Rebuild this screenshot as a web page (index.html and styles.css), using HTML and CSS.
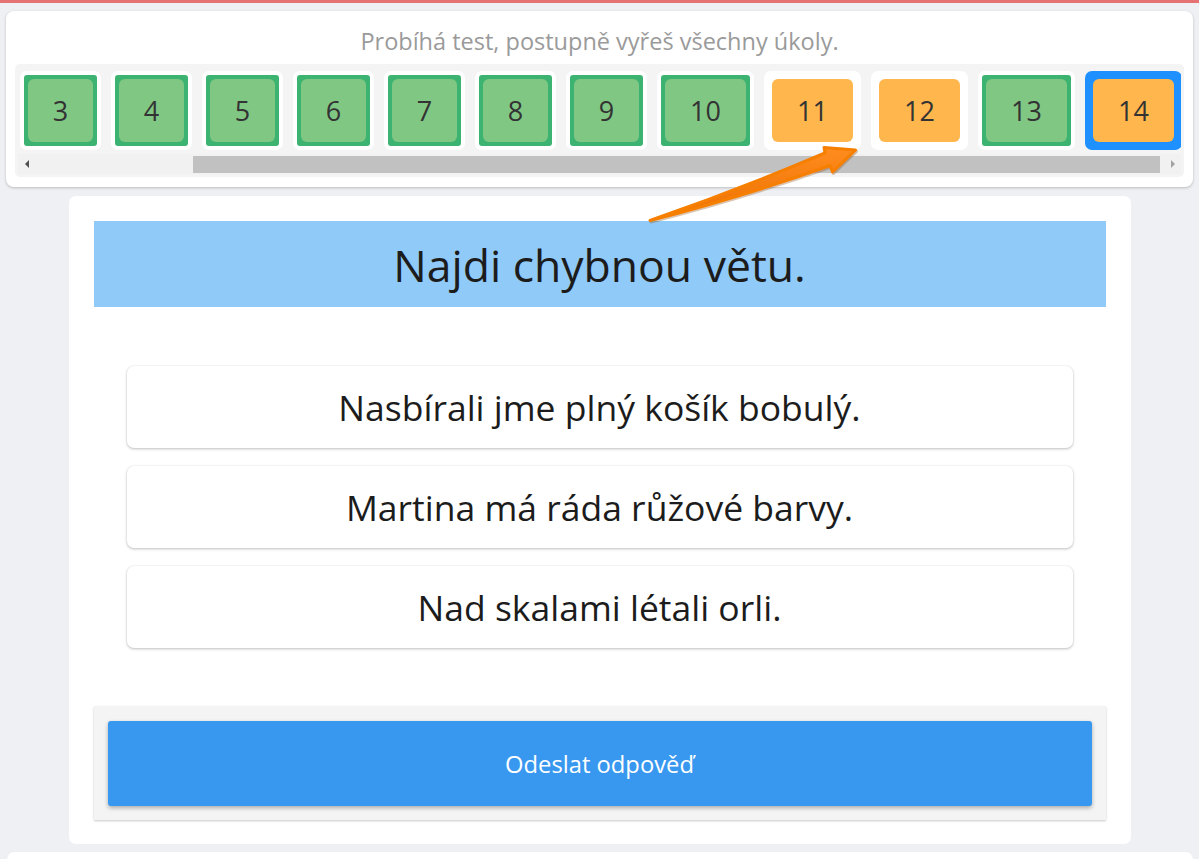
FILE: index.html
```html
<!DOCTYPE html>
<html lang="cs">
<head>
<meta charset="utf-8">
<title>Test</title>
<link rel="stylesheet" href="styles.css">
</head>
<body>
<div class="topline"></div>
<header class="status-card">
  <p class="status-text">Probíhá test, postupně vyřeš všechny úkoly.</p>
  <div class="tiles-box">
    <div class="tiles-row">
      <div class="tile"><div class="tile-in ok"><div class="face green">3</div></div></div>
      <div class="tile"><div class="tile-in ok"><div class="face green">4</div></div></div>
      <div class="tile"><div class="tile-in ok"><div class="face green">5</div></div></div>
      <div class="tile"><div class="tile-in ok"><div class="face green">6</div></div></div>
      <div class="tile"><div class="tile-in ok"><div class="face green">7</div></div></div>
      <div class="tile"><div class="tile-in ok"><div class="face green">8</div></div></div>
      <div class="tile"><div class="tile-in ok"><div class="face green">9</div></div></div>
      <div class="tile"><div class="tile-in ok"><div class="face green wide">10</div></div></div>
      <div class="tile"><div class="tile-in"><div class="face orange wide">11</div></div></div>
      <div class="tile"><div class="tile-in"><div class="face orange wide">12</div></div></div>
      <div class="tile"><div class="tile-in ok"><div class="face green wide">13</div></div></div>
      <div class="tile current"><div class="tile-in"><div class="face orange wide">14</div></div></div>
    </div>
    <div class="hscroll">
      <div class="sbtn"><span class="tri-left"></span></div>
      <div class="track"><div class="thumb"></div></div>
      <div class="sbtn"><span class="tri-right"></span></div>
    </div>
  </div>
</header>

<main class="task-card">
  <h1 class="task-title">Najdi chybnou větu.</h1>
  <div class="options">
    <div class="option">Nasbírali jme plný košík bobulý.</div>
    <div class="option">Martina má ráda růžové barvy.</div>
    <div class="option">Nad skalami létali orli.</div>
  </div>
  <div class="submit-box">
    <button class="submit-btn" type="button">Odeslat odpověď</button>
  </div>
</main>
<div class="next-card"></div>

<svg class="pointer-arrow" width="1199" height="859" viewBox="0 0 1199 859" aria-hidden="true">
  <defs>
    <linearGradient id="ag" x1="0" y1="0" x2="0" y2="1">
      <stop offset="0" stop-color="#ff8c1f"/>
      <stop offset="1" stop-color="#ec7000"/>
    </linearGradient>
  </defs>
  <path class="arrow-shadow" d="M650,220.5 Q738,190 825,153 L824,147.5 L855.5,150 L832.5,172 L830,165.5 Q742,197 650,220.5 Z" transform="translate(1,1.5)"/>
  <path class="arrow-body" d="M650,220.5 Q738,190 825,153 L824,147.5 L855.5,150 L832.5,172 L830,165.5 Q742,197 650,220.5 Z" fill="url(#ag)"/>
</svg>
</body>
</html>
```
FILE: styles.css
```css
* { box-sizing: border-box; }
html, body { margin: 0; padding: 0; }
body {
  background: #eff0f4;
  font-family: "Open Sans", "Noto Sans", "DejaVu Sans", sans-serif;
  color: #222;
  width: 1199px;
  height: 859px;
  overflow: hidden;
  position: relative;
}
.topline {
  height: 3px;
  background: #e57373;
}
.status-card {
  margin: 8px 6px 0 6px;
  background: #fff;
  border-radius: 8px;
  box-shadow: 0 1px 3px rgba(0,0,0,0.22);
  padding: 16px 9px 10px 9px;
}
.status-text {
  margin: 0;
  text-align: center;
  font-size: 23.5px;
  line-height: 28px;
  color: #9a9a9a;
}
.tiles-box {
  margin-top: 9px;
  background: #f4f4f4;
  border-radius: 5px;
  padding: 7px 3px 3px 3px;
}
.tiles-row {
  display: flex;
  gap: 10px;
  margin-left: 2px;
  overflow: hidden;
  height: 79px;
}
.tile {
  flex: none;
  background: #fff;
  border-radius: 7px;
  padding: 4px;
}
.tile.current { background: #1e90ff; }
.tile-in {
  padding: 4px;
  border-radius: 3px;
}
.tile-in.ok { background: #3cb371; }
.face {
  width: 65px;
  height: 63px;
  border-radius: 6px;
  display: flex;
  align-items: center;
  justify-content: center;
  font-size: 27px;
  color: #333;
}
.face.wide { width: 81px; }
.face.green { background: #81c784; }
.face.orange { background: #ffb74d; }
.hscroll {
  margin-top: 4px;
  height: 20px;
  display: flex;
  background: #f1f1f1;
}
.sbtn {
  width: 17px;
  flex: none;
  display: flex;
  align-items: center;
  justify-content: center;
}
.tri-left {
  width: 0; height: 0;
  border-top: 4px solid transparent;
  border-bottom: 4px solid transparent;
  border-right: 4px solid #505050;
}
.tri-right {
  width: 0; height: 0;
  border-top: 4px solid transparent;
  border-bottom: 4px solid transparent;
  border-left: 4px solid #a3a3a3;
}
.track {
  flex: 1;
  display: flex;
  align-items: center;
}
.thumb {
  margin-left: 158px;
  width: 967px;
  height: 17px;
  background: #c1c1c1;
}
.task-card {
  width: 1062px;
  margin: 9px auto 0 auto;
  background: #fff;
  border-radius: 7px;
  padding: 25px 25px 24px 25px;
}
.task-title {
  margin: 0;
  height: 86px;
  background: #90caf9;
  display: flex;
  align-items: center;
  justify-content: center;
  font-size: 44.5px;
  font-weight: 400;
  color: #1c1c1c;
}
.options {
  margin: 59px 33px 0 33px;
  display: flex;
  flex-direction: column;
  gap: 18px;
}
.option {
  height: 82px;
  background: #fff;
  border-radius: 7px;
  box-shadow: 0 1px 3px rgba(0,0,0,0.25), 0 0 2px rgba(0,0,0,0.06);
  display: flex;
  align-items: center;
  justify-content: center;
  font-size: 35.5px;
  color: #1c1c1c;
}
.submit-box {
  margin-top: 58px;
  background: #f4f4f4;
  box-shadow: 0 1px 2px rgba(0,0,0,0.22);
  padding: 15px 14px 14px 14px;
}
.submit-btn {
  display: block;
  width: 100%;
  height: 85px;
  border: none;
  border-radius: 3px;
  background: #3898ef;
  color: #fff;
  font-family: inherit;
  font-size: 23.75px;
  box-shadow: 0 2px 4px rgba(0,0,0,0.3);
}
.next-card {
  margin: 8px 6px 0 7px;
  height: 40px;
  background: #fff;
  border-radius: 8px;
}
.pointer-arrow {
  position: absolute;
  left: 0;
  top: 0;
  pointer-events: none;
}
.arrow-shadow {
  fill: #8a4300;
  stroke: #8a4300;
  stroke-width: 3;
  stroke-linejoin: round;
  opacity: 0.3;
}
.arrow-body {
  stroke: #f77f00;
  stroke-width: 3;
  stroke-linejoin: round;
}
```
